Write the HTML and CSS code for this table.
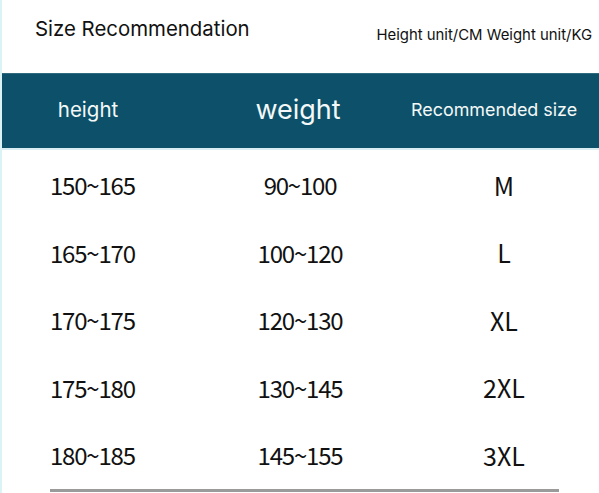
FILE: index.html
```html
<!DOCTYPE html>
<html>
<head>
<meta charset="utf-8">
<link rel="stylesheet" href="styles.css">
</head>
<body>
<div class="page">
  <div class="top">
    <div class="title">Size Recommendation</div>
    <div class="units">Height unit/CM Weight unit/KG</div>
  </div>
  <div class="band">
    <div class="hcell h1">height</div>
    <div class="hcell h2">weight</div>
    <div class="hcell h3">Recommended size</div>
  </div>
  <div class="rows">
    <div class="row"><div class="c c1">150~165</div><div class="c c2">90~100</div><div class="c c3">M</div></div>
    <div class="row"><div class="c c1">165~170</div><div class="c c2">100~120</div><div class="c c3">L</div></div>
    <div class="row"><div class="c c1">170~175</div><div class="c c2">120~130</div><div class="c c3">XL</div></div>
    <div class="row"><div class="c c1">175~180</div><div class="c c2">130~145</div><div class="c c3">2XL</div></div>
    <div class="row"><div class="c c1">180~185</div><div class="c c2">145~155</div><div class="c c3">3XL</div></div>
  </div>
  <div class="rule"></div>
</div>
</body>
</html>
```
FILE: styles.css
```css
html, body { margin: 0; padding: 0; background: #fff; }
.page {
  width: 599px;
  height: 493px;
  overflow: hidden;
  font-family: Inter, "Noto Sans", sans-serif;
  color: #1a1a1a;
  border-left: 2px solid #dcf3f6;
  box-sizing: border-box;
}
.top {
  height: 73px;
  display: flex;
  align-items: center;
  justify-content: space-between;
  padding: 0 7px 0 33px;
  box-sizing: border-box;
}
.title { font-size: 20.4px; margin-top: -17px; color: #111; }
.units { font-size: 14.9px; margin-top: -4px; color: #111; }
.band {
  height: 77px;
  background: #0c5169;
  color: #f4f8f8;
  display: grid;
  grid-template-columns: 176px 244px 1fr;
  align-items: center;
  margin-left: -2px;
  padding-bottom: 4px;
  border-top: 1px solid #2f6a7e;
  border-bottom: 2px solid #d9eef2;
  box-sizing: border-box;
}
.hcell { text-align: center; }
.h1 { font-size: 20.5px; }
.h2 { font-size: 27px; }
.h3 { font-size: 17.9px; text-align: left; margin-left: -9px; white-space: nowrap; }
.rows {
  display: flex;
  flex-direction: column;
  padding-top: 1px;
}
.row {
  height: 67.5px;
  display: grid;
  grid-template-columns: 180px 236px 172px;
  align-items: center;
}
.c {
  text-align: center;
  font-family: "Noto Sans CJK SC", "Noto Sans", sans-serif;
  font-size: 24px;
  font-weight: 400;
  letter-spacing: -1.2px;
  color: #111;
}
.c1 { text-align: left; padding-left: 48px; }
.c3 { font-size: 25px; padding-left: 0; letter-spacing: 0; }
.rule {
  height: 3px;
  margin: 0 40px 0 48px;
  background: #9a9a9a;
}
```
